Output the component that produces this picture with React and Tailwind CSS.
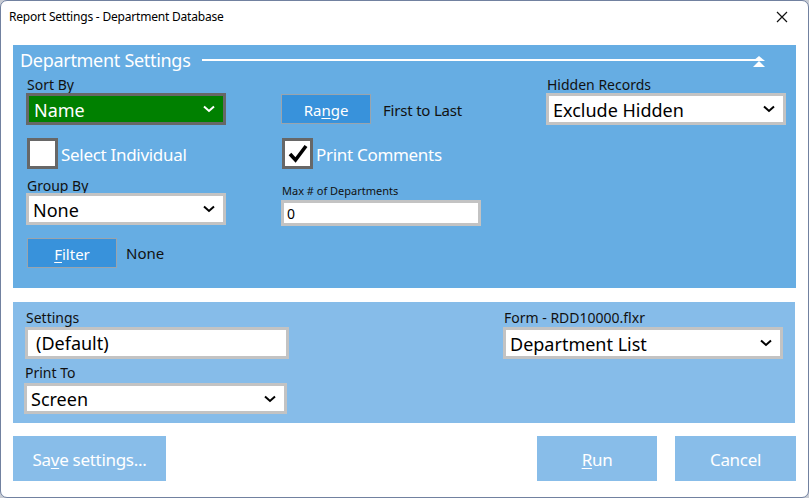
import React from "react";

const F = { fontFamily: '"Noto Sans", "Open Sans", sans-serif' };

function Chevron({ color = "#000" }) {
  return (
    <svg width="12" height="8" viewBox="0 0 12 8">
      <polyline points="1,1.5 6,6 11,1.5" fill="none" stroke={color} strokeWidth="2" />
    </svg>
  );
}

function Check() {
  return (
    <svg width="22" height="20" viewBox="0 0 22 20">
      <polyline points="3,10 8.5,16 19,2" fill="none" stroke="#000" strokeWidth="3.6" />
    </svg>
  );
}

function Select({ value, className = "", green = false }) {
  return (
    <div
      className={`flex items-center justify-between border-[3px] pl-[4px] pr-[8px] text-[18px] ${
        green ? "bg-[#008000] border-[#676767] text-white" : "bg-white border-[#c3c3c3] text-black"
      } ${className}`}
    >
      <span className="leading-none pt-[1px]">{value}</span>
      <Chevron color={green ? "#fff" : "#000"} />
    </div>
  );
}

function Btn({ children, className = "" }) {
  return (
    <div
      className={`flex items-center justify-center bg-[#3892db] border border-[#9aa4ad] text-white text-[15px] pt-[2px] ${className}`}
    >
      {children}
    </div>
  );
}

export default function App() {
  return (
    <div className="w-[809px] h-[498px] bg-[#c8ccd4] overflow-hidden" style={F}>
      <div className="w-[809px] h-[498px] bg-white border border-[#7181a0] rounded-[7px] relative">
        {/* title bar */}
        <div className="h-[31px] flex items-center justify-between pl-[8px] pr-[20px]">
          <span className="text-[12px] text-black tracking-[-0.2px]">Report Settings - Department Database</span>
          <svg width="12" height="12" viewBox="0 0 12 12">
            <path d="M1 1 L11 11 M11 1 L1 11" stroke="#111" strokeWidth="1.2" />
          </svg>
        </div>

        {/* Panel 1 */}
        <div className="mt-[13px] ml-[12px] w-[783px] h-[243px] bg-[#66ade3] pl-[13px] relative">
          <div className="flex items-center h-[30px] -ml-[6px]">
            <span className="text-[18px] text-white tracking-[-0.3px] leading-none">Department Settings</span>
            <div className="ml-[12px] h-[2px] w-[555px] bg-white" />
          </div>
          <svg className="absolute left-[739px] top-[11px]" width="14" height="12" viewBox="0 0 14 12">
            <polygon points="7,0 13,5 1,5" fill="#fff" />
            <polygon points="7,5 13,11 1,11" fill="#fff" />
          </svg>

          <div className="flex">
            {/* col 1 */}
            <div className="w-[200px] flex flex-col">
              <span className="text-[14px] leading-[18px] text-[#111] ml-[1px] h-[18px] mt-[1px]">Sort By</span>
              <Select value="Name" green className="h-[32px] w-[200px] -mt-[1px] pl-[5px]" />
              <div className="flex items-center mt-[13px]">
                <div className="w-[31px] h-[31px] border-[3px] border-[#676767] bg-white ml-[1px]" />
                <span className="ml-[3px] text-[17px] text-white tracking-[-0.3px] pt-[3px]">Select Individual</span>
              </div>
              <span className="text-[14px] leading-[18px] text-[#111] ml-[1px] mt-[8px]">Group By</span>
              <Select value="None" className="h-[32px] w-[200px] mt-[-2px]" />
              <div className="flex items-center mt-[13px]">
                <Btn className="w-[90px] h-[30px] ml-[1px]">
                  <span><span className="underline underline-offset-2">F</span>ilter</span>
                </Btn>
                <span className="ml-[9px] text-[15px] text-[#111] pt-[1px]">None</span>
              </div>
            </div>

            {/* col 2 */}
            <div className="w-[200px] ml-[55px] flex flex-col">
              <div className="flex items-center mt-[19px]">
                <Btn className="w-[90px] h-[30px]">
                  <span>Ra<span className="underline underline-offset-2">n</span>ge</span>
                </Btn>
                <span className="ml-[12px] text-[15px] text-[#111] tracking-[-0.2px] pt-[2px]">First to Last</span>
              </div>
              <div className="flex items-center mt-[14px]">
                <div className="w-[31px] h-[31px] border-[3px] border-[#676767] bg-white ml-[1px] flex items-center justify-center">
                  <Check />
                </div>
                <span className="ml-[3px] text-[17px] text-white tracking-[-0.3px] pt-[3px]">Print Comments</span>
              </div>
              <span className="text-[11px] leading-[14px] text-[#111] ml-[1px] mt-[15px]">Max # of Departments</span>
              <div className="h-[26px] w-[200px] border-[3px] border-[#c3c3c3] bg-white mt-[2px] flex items-center pl-[3px] text-[14px] text-black">
                0
              </div>
            </div>

            {/* col 3 */}
            <div className="w-[240px] ml-[65px] flex flex-col">
              <span className="text-[14px] leading-[18px] text-[#111] ml-[1px] mt-[1px]">Hidden Records</span>
              <Select value="Exclude Hidden" className="h-[32px] w-[240px] -mt-[1px]" />
            </div>
          </div>
        </div>

        {/* Panel 2 */}
        <div className="mt-[14px] ml-[12px] w-[782px] h-[121px] bg-[#86bce9] flex pt-[7px]">
          <div className="w-[264px] ml-[12px] flex flex-col">
            <span className="text-[14px] leading-[18px] text-[#111] ml-[1px]">Settings</span>
            <div className="h-[32px] w-[264px] border-[3px] border-[#c3c3c3] bg-white flex items-center pl-[8px] text-[18px] text-black">
              (Default)
            </div>
            <span className="text-[14px] leading-[18px] text-[#111] mt-[5px]">Print To</span>
            <Select value="Screen" className="h-[31px] w-[263px] -ml-[1px] mt-[1px]" />
          </div>
          <div className="w-[280px] ml-[214px] flex flex-col">
            <span className="text-[14px] leading-[18px] text-[#111] ml-[1px]">Form - RDD10000.flxr</span>
            <Select value="Department List" className="h-[32px] w-[280px]" />
          </div>
        </div>

        {/* Buttons */}
        <div className="flex mt-[13px] ml-[12px] w-[783px] text-white text-[17px] tracking-[-0.3px]">
          <div className="w-[153px] h-[45px] bg-[#88bde9] flex items-center justify-center pt-[3px]">
            <span>Sa<span className="underline underline-offset-2">v</span>e settings...</span>
          </div>
          <div className="w-[120px] h-[45px] bg-[#88bde9] flex items-center justify-center ml-auto pt-[3px]">
            <span><span className="underline underline-offset-2">R</span>un</span>
          </div>
          <div className="w-[121px] h-[45px] bg-[#88bde9] flex items-center justify-center ml-[18px] pt-[3px]">
            Cancel
          </div>
        </div>
      </div>
    </div>
  );
}
